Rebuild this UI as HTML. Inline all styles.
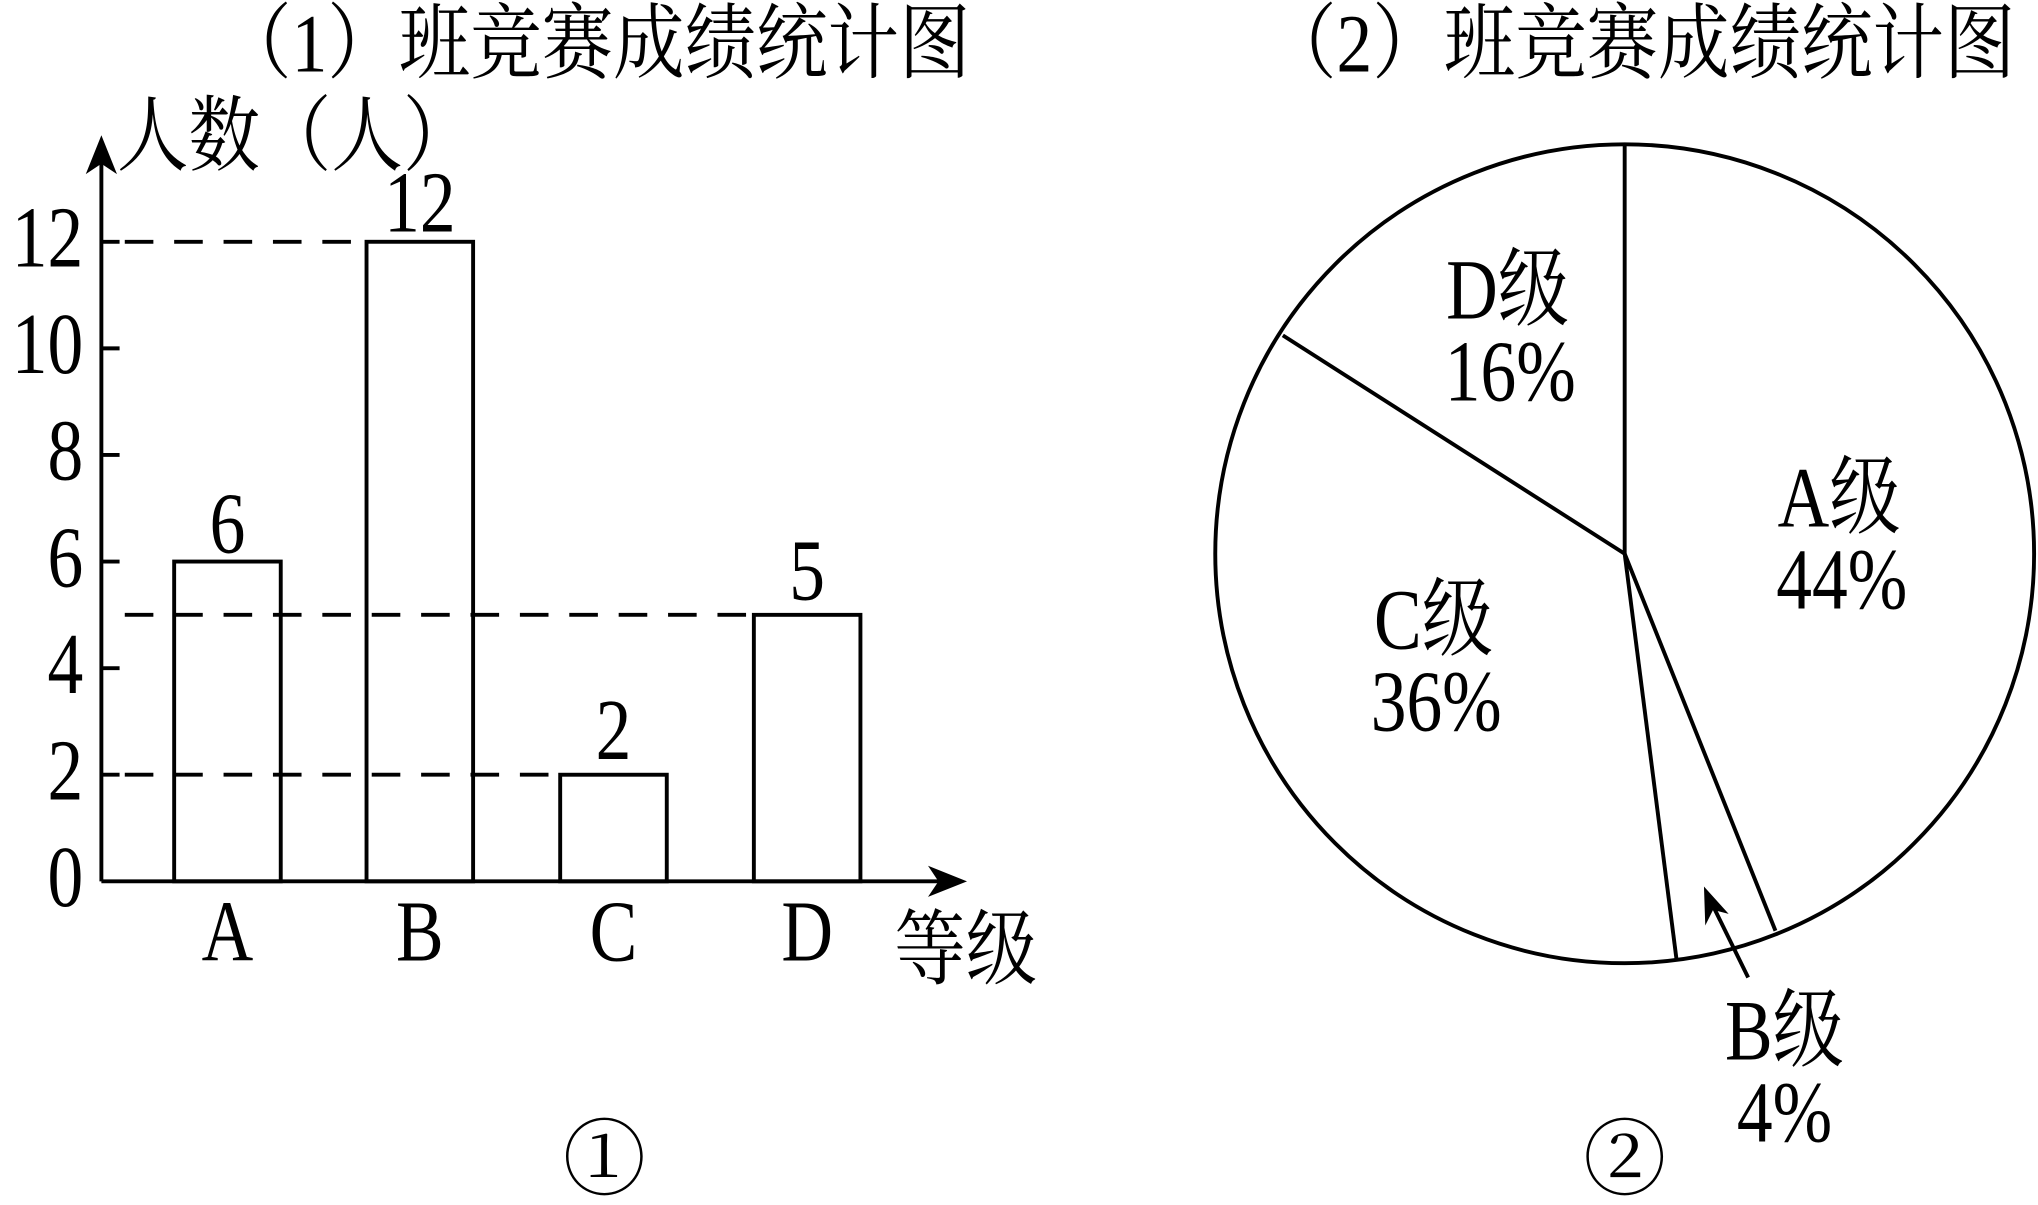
<!DOCTYPE html>
<html><head><meta charset="utf-8"><style>
html,body{margin:0;padding:0;background:#fff;}
svg{display:block;}
text{font-family:"Liberation Serif","Noto Serif CJK SC",serif;fill:#000;}
</style></head><body>
<svg width="2038" height="1205" viewBox="0 0 1568 927" preserveAspectRatio="none" xmlns="http://www.w3.org/2000/svg">
<rect width="1568" height="927" fill="#fff"/>
<g stroke="#000" stroke-width="3" fill="none">
<line x1="78" y1="678" x2="78" y2="120"/>
<line x1="78" y1="678" x2="725" y2="678"/>
<line x1="78" y1="596" x2="92" y2="596"/>
<line x1="78" y1="514" x2="92" y2="514"/>
<line x1="78" y1="432" x2="92" y2="432"/>
<line x1="78" y1="350" x2="92" y2="350"/>
<line x1="78" y1="268" x2="92" y2="268"/>
<line x1="78" y1="186" x2="92" y2="186"/>
<rect x="134" y="432" width="82" height="246"/>
<rect x="282" y="186" width="82" height="492"/>
<rect x="431" y="596" width="82" height="82"/>
<rect x="580" y="473" width="82" height="205"/>
</g>
<g stroke="#000" stroke-width="3" stroke-dasharray="22,16">
<line x1="96" y1="186" x2="282" y2="186"/>
<line x1="96" y1="473" x2="580" y2="473"/>
<line x1="96" y1="596" x2="431" y2="596"/>
</g>
<polygon points="78,104 66,134 78,126 90,134" fill="#000"/>
<polygon points="744,678 714,666 722,678 714,690" fill="#000"/>
<g font-size="55">
<text transform="translate(458,55) scale(1,1.15)" text-anchor="middle">（1）班竞赛成绩统计图</text>
<text transform="translate(1262,55) scale(1,1.15)" text-anchor="middle">（2）班竞赛成绩统计图</text>
<text transform="translate(90,126) scale(1,1.15)">人数（人）</text>
<text transform="translate(688,752) scale(1,1.15)">等级</text>
</g>
<g font-size="55" text-anchor="end">
<text transform="translate(64,697) scale(1,1.22)">0</text>
<text transform="translate(64,615) scale(1,1.22)">2</text>
<text transform="translate(64,533) scale(1,1.22)">4</text>
<text transform="translate(64,451) scale(1,1.22)">6</text>
<text transform="translate(64,369) scale(1,1.22)">8</text>
<text transform="translate(64,287) scale(1,1.22)">10</text>
<text transform="translate(64,205) scale(1,1.22)">12</text>
</g>
<g font-size="55" text-anchor="middle">
<text transform="translate(175,425) scale(1,1.22)">6</text>
<text transform="translate(323,178) scale(1,1.22)">12</text>
<text transform="translate(472,584) scale(1,1.22)">2</text>
<text transform="translate(621,461) scale(1,1.22)">5</text>
<text transform="translate(175,739) scale(1,1.22)">A</text>
<text transform="translate(323,739) scale(1,1.22)">B</text>
<text transform="translate(472,739) scale(1,1.22)">C</text>
<text transform="translate(621,739) scale(1,1.22)">D</text>
<text x="465" y="914" font-size="64">①</text>
<text x="1250" y="914" font-size="64">②</text>
</g>
<g stroke="#000" stroke-width="3" fill="none">
<circle cx="1250" cy="426" r="315"/>
<line x1="1250" y1="426" x2="1250" y2="111"/>
<line x1="1250" y1="426" x2="987" y2="258"/>
<line x1="1250" y1="426" x2="1290" y2="739"/>
<line x1="1250" y1="426" x2="1366" y2="716"/>
<line x1="1345" y1="752" x2="1318" y2="697"/>
</g>
<polygon points="1311,682 1312,712 1318,700 1330,703" fill="#000"/>
<g font-size="55" text-anchor="middle">
<text transform="translate(1160,245) scale(1,1.2)">D级</text>
<text transform="translate(1162,308) scale(1,1.22)">16%</text>
<text transform="translate(1415,405) scale(1,1.2)">A级</text>
<text transform="translate(1417,468) scale(1,1.22)">44%</text>
<text transform="translate(1103,499) scale(1,1.2)">C级</text>
<text transform="translate(1105,562) scale(1,1.22)">36%</text>
<text transform="translate(1373,815) scale(1,1.2)">B级</text>
<text transform="translate(1373,878) scale(1,1.22)">4%</text>
</g>
</svg>
</body></html>
